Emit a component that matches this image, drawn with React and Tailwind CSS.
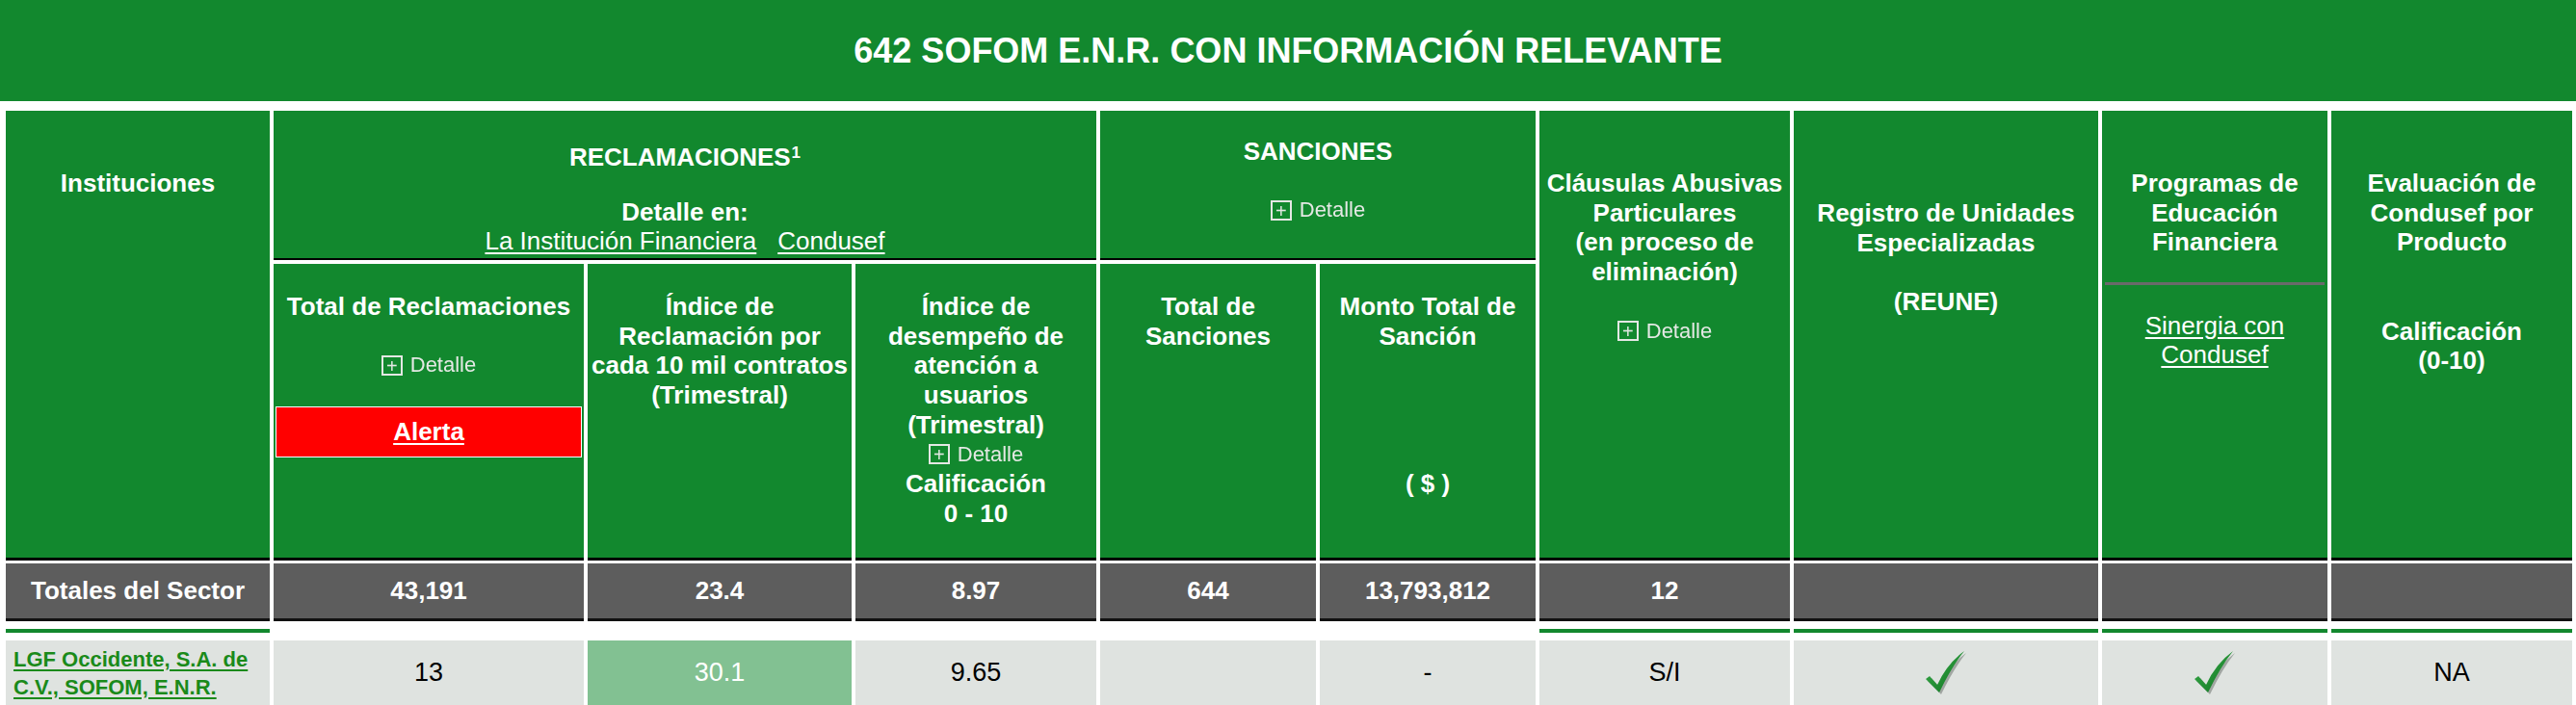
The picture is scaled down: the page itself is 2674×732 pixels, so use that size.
import React from 'react';

const GREEN = 'bg-[#12882e]';
const cols = 'grid grid-cols-[274px_322px_274px_250px_224px_224px_260px_316px_234px_250px] gap-x-[4px]';

function Detalle() {
  return (
    <div className="flex items-center justify-center gap-[8px] h-[30.7px] text-[22px] font-normal text-[#e4e8e4] blur-[0.4px]">
      <span className="w-[22px] h-[21px] border-2 border-[#e4e8e4] flex items-center justify-center text-[20px] leading-none">+</span>
      <span>Detalle</span>
    </div>
  );
}

function Check() {
  return (
    <svg width="44" height="46" viewBox="0 0 44 46">
      <defs>
        <linearGradient id="ck" x1="0" y1="0" x2="1" y2="1">
          <stop offset="0" stopColor="#3fb34f" />
          <stop offset="1" stopColor="#0b6e1d" />
        </linearGradient>
      </defs>
      <path d="M3 31 L7 28 L15 37 Q25 15 43 2 Q30 18 17 45 Z" fill="#6d7470" opacity="0.55" />
      <path d="M1 29 L5 26 L13 35 Q23 13 41 0 Q28 16 15 43 Z" fill="url(#ck)" />
    </svg>
  );
}

export default function App() {
  const head = `${GREEN} text-white font-bold text-center text-[26px] leading-[30.7px]`;
  return (
    <div className="min-h-screen bg-white font-['Liberation_Sans',Arial,sans-serif]">
      {/* Title bar */}
      <div className={`${GREEN} h-[105px] flex items-center justify-center`}>
        <h1 className="text-white font-bold text-[36px] leading-none">
          642 SOFOM E.N.R. CON INFORMACIÓN RELEVANTE
        </h1>
      </div>

      <div className="pl-[6px] pt-[10px]">
        {/* Header block */}
        <div className={`${cols} grid-rows-[155px_308px] gap-y-[4px]`}>
          <div className={`${head} col-start-1 row-start-1 row-span-2 border-b-[3px] border-black pt-[60px]`}>
            Instituciones
          </div>

          <div className={`${head} col-start-2 col-span-3 row-start-1 border-b-2 border-black pt-[33px]`}>
            <div>RECLAMACIONES<sup className="text-[17px] ml-[1px]">1</sup></div>
            <div className="mt-[26px]">Detalle en:</div>
            <div className="font-normal leading-[31px] flex justify-center gap-[22px]">
              <a className="underline underline-offset-[3px]">La Institución Financiera</a>
              <a className="underline underline-offset-[3px]">Condusef</a>
            </div>
          </div>

          <div className={`${head} col-start-5 col-span-2 row-start-1 border-b-2 border-black pt-[27px]`}>
            <div>SANCIONES</div>
            <div className="h-[30.7px]" />
            <Detalle />
          </div>

          <div className={`${head} col-start-7 row-start-1 row-span-2 border-b-[3px] border-black pt-[60px]`}>
            <div>Cláusulas Abusivas</div>
            <div>Particulares</div>
            <div>(en proceso de</div>
            <div>eliminación)</div>
            <div className="h-[30.7px]" />
            <Detalle />
          </div>

          <div className={`${head} col-start-8 row-start-1 row-span-2 border-b-[3px] border-black pt-[91px]`}>
            <div>Registro de Unidades</div>
            <div>Especializadas</div>
            <div className="h-[30.7px]" />
            <div>(REUNE)</div>
          </div>

          <div className={`${head} col-start-9 row-start-1 row-span-2 border-b-[3px] border-black pt-[60px]`}>
            <div>Programas de</div>
            <div>Educación</div>
            <div>Financiera</div>
            <div className="mt-[26px] mx-[3px] h-[3px] bg-[#6a6a6a]" />
            <div className="mt-[27px] font-normal leading-[30px]">
              <a className="underline underline-offset-[3px]">Sinergia con<br />Condusef</a>
            </div>
          </div>

          <div className={`${head} col-start-10 row-start-1 row-span-2 border-b-[3px] border-black pt-[60px]`}>
            <div>Evaluación de</div>
            <div>Condusef por</div>
            <div>Producto</div>
            <div className="h-[61.4px]" />
            <div>Calificación</div>
            <div>(0-10)</div>
          </div>

          {/* Sub headers */}
          <div className={`${head} col-start-2 row-start-2 border-b-[3px] border-black pt-[29px]`}>
            <div>Total de Reclamaciones</div>
            <div className="h-[30.7px]" />
            <Detalle />
            <div className="mt-[27px] mx-[2px] h-[53px] bg-[#ff0000] border border-white flex items-center justify-center">
              <a className="underline underline-offset-[3px]">Alerta</a>
            </div>
          </div>

          <div className={`${head} col-start-3 row-start-2 border-b-[3px] border-black pt-[29px]`}>
            <div>Índice de</div>
            <div>Reclamación por</div>
            <div>cada 10 mil contratos</div>
            <div>(Trimestral)</div>
          </div>

          <div className={`${head} col-start-4 row-start-2 border-b-[3px] border-black pt-[29px]`}>
            <div>Índice de</div>
            <div>desempeño de</div>
            <div>atención a</div>
            <div>usuarios</div>
            <div>(Trimestral)</div>
            <Detalle />
            <div>Calificación</div>
            <div>0 - 10</div>
          </div>

          <div className={`${head} col-start-5 row-start-2 border-b-[3px] border-black pt-[29px]`}>
            <div>Total de</div>
            <div>Sanciones</div>
          </div>

          <div className={`${head} col-start-6 row-start-2 border-b-[3px] border-black pt-[29px]`}>
            <div>Monto Total de</div>
            <div>Sanción</div>
            <div className="h-[122.8px]" />
            <div>( $ )</div>
          </div>
        </div>

        {/* Sector totals */}
        <div className={`${cols} mt-[3px]`}>
          {['Totales del Sector', '43,191', '23.4', '8.97', '644', '13,793,812', '12', '', '', ''].map((v, i) => (
            <div
              key={i}
              className="h-[60px] bg-[#5d5d5d] border-b-[3px] border-[#111111] flex items-center justify-center text-white font-bold text-[26px]"
            >
              {v}
            </div>
          ))}
        </div>

        {/* Divider bars */}
        <div className={`${cols} mt-[8px]`}>
          {[true, false, false, false, false, false, true, true, true, true].map((on, i) => (
            <div key={i} className={on ? `h-[4px] ${GREEN}` : 'h-[4px]'} />
          ))}
        </div>

        {/* Institution row */}
        <div className={`${cols} mt-[8px]`}>
          <div className="h-[67px] bg-[#dfe3e0] flex items-center pl-[8px]">
            <a className="text-[#1a8a1a] font-bold text-[22px] leading-[29px] underline underline-offset-[3px]">
              LGF Occidente, S.A. de C.V., SOFOM, E.N.R.
            </a>
          </div>
          <div className="h-[67px] bg-[#dfe3e0] flex items-center justify-center text-[27px] text-black">13</div>
          <div className="h-[67px] bg-[#82c192] flex items-center justify-center text-[27px] text-white">30.1</div>
          <div className="h-[67px] bg-[#dfe3e0] flex items-center justify-center text-[27px] text-black">9.65</div>
          <div className="h-[67px] bg-[#dfe3e0]" />
          <div className="h-[67px] bg-[#dfe3e0] flex items-center justify-center text-[27px] text-black">-</div>
          <div className="h-[67px] bg-[#dfe3e0] flex items-center justify-center text-[27px] text-black">S/I</div>
          <div className="h-[67px] bg-[#dfe3e0] flex items-center justify-center"><Check /></div>
          <div className="h-[67px] bg-[#dfe3e0] flex items-center justify-center"><Check /></div>
          <div className="h-[67px] bg-[#dfe3e0] flex items-center justify-center text-[27px] text-black">NA</div>
        </div>
      </div>
    </div>
  );
}
